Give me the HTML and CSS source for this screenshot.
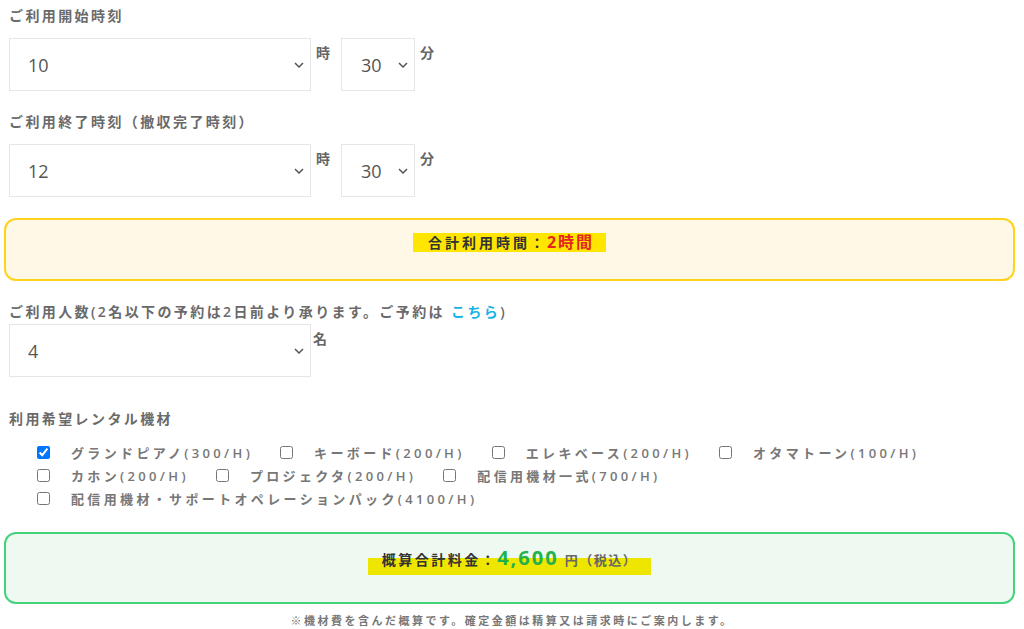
FILE: index.html
```html
<!DOCTYPE html>
<html lang="ja">
<head>
<meta charset="UTF-8" />
<meta name="viewport" content="width=device-width, initial-scale=1" />
<title>ご利用予約</title>
<link rel="stylesheet" href="styles.css">
</head>
<body>
<div class="form">
  <!-- 開始時刻 -->
  <div class="field">
    <div class="field-label">ご利用開始時刻</div>
    <div class="field-row">
      <div class="select-wrap select-hour">
        <select><option>10</option></select>
        <svg class="chevron" width="10" height="6" viewBox="0 0 10 6"><polyline points="1,1 5,5 9,1" /></svg>
      </div>
      <span class="unit">時</span>
      <div class="select-wrap select-min">
        <select><option>30</option></select>
        <svg class="chevron" width="10" height="6" viewBox="0 0 10 6"><polyline points="1,1 5,5 9,1" /></svg>
      </div>
      <span class="unit">分</span>
    </div>
  </div>

  <!-- 終了時刻 -->
  <div class="field">
    <div class="field-label">ご利用終了時刻（撤収完了時刻）</div>
    <div class="field-row">
      <div class="select-wrap select-hour">
        <select><option>12</option></select>
        <svg class="chevron" width="10" height="6" viewBox="0 0 10 6"><polyline points="1,1 5,5 9,1" /></svg>
      </div>
      <span class="unit">時</span>
      <div class="select-wrap select-min">
        <select><option>30</option></select>
        <svg class="chevron" width="10" height="6" viewBox="0 0 10 6"><polyline points="1,1 5,5 9,1" /></svg>
      </div>
      <span class="unit">分</span>
    </div>
  </div>

  <div class="summary summary-time">
    <span class="marker">合計利用時間：<span class="hours">2時間</span></span>
  </div>

  <!-- 人数 -->
  <div class="field field-people">
    <div class="field-label">ご利用人数(2名以下の予約は2日前より承ります。ご予約は <a href="#" class="link">こちら</a>)</div>
    <div class="field-row">
      <div class="select-wrap select-hour">
        <select><option>4</option></select>
        <svg class="chevron" width="10" height="6" viewBox="0 0 10 6"><polyline points="1,1 5,5 9,1" /></svg>
      </div>
      <span class="unit unit-tight">名</span>
    </div>
  </div>

  <!-- 機材 -->
  <div class="field-label">利用希望レンタル機材</div>
  <div class="options">
    <label class="option"><input type="checkbox" checked><span>グランドピアノ(300/H)</span></label>
    <label class="option"><input type="checkbox"><span>キーボード(200/H)</span></label>
    <label class="option"><input type="checkbox"><span>エレキベース(200/H)</span></label>
    <label class="option"><input type="checkbox"><span>オタマトーン(100/H)</span></label>
    <label class="option"><input type="checkbox"><span>カホン(200/H)</span></label>
    <label class="option"><input type="checkbox"><span>プロジェクタ(200/H)</span></label>
    <label class="option"><input type="checkbox"><span>配信用機材一式(700/H)</span></label>
    <label class="option"><input type="checkbox"><span>配信用機材・サポートオペレーションパック(4100/H)</span></label>
  </div>

  <div class="summary summary-price">
    <span class="marker marker-low">概算合計料金：<span class="price">4,600</span> <span class="yen">円（税込）</span></span>
  </div>
  <div class="note">※機材費を含んだ概算です。確定金額は精算又は請求時にご案内します。</div>
</div>
</body>
</html>
```

FILE: styles.css
```css
/* 基本 */
html, body {
  margin: 0;
  padding: 0;
  background: #fff;
  font-family: 'Open Sans', 'Noto Sans CJK JP', sans-serif;
  color: #555;
}
.form {
  padding: 6px 9px 0 9px;
}
.field {
  margin-bottom: 21px;
}
.field-label {
  font-size: 14px;
  line-height: 20px;
  font-weight: 600;
  color: #6a6a6a;
  letter-spacing: 2.4px;
  margin-bottom: 12px;
}
.field-people {
  margin-bottom: 32px;
}
.field-people .field-label {
  margin-bottom: 2px;
}
.link {
  color: #17b3e6;
  text-decoration: none;
}
.field-row {
  display: flex;
  align-items: flex-start;
}

/* セレクト */
.select-wrap {
  position: relative;
  height: 53px;
}
.select-wrap select {
  appearance: none;
  -webkit-appearance: none;
  box-sizing: border-box;
  width: 100%;
  height: 53px;
  margin: 0;
  padding: 0 0 0 18px;
  border: 1px solid #e6e6e6;
  border-radius: 0;
  background: #fff;
  font-family: 'Open Sans', 'Noto Sans CJK JP', sans-serif;
  font-size: 18px;
  color: #555;
  outline: none;
}
.select-hour { width: 302px; }
.select-min { width: 74px; }
.select-min select { padding-left: 19px; }
.chevron {
  position: absolute;
  right: 7px;
  top: 24px;
  pointer-events: none;
}
.chevron polyline {
  fill: none;
  stroke: #555;
  stroke-width: 1.5;
}
.unit {
  font-size: 14px;
  line-height: 20px;
  font-weight: 600;
  color: #666;
  padding-top: 5px;
  margin: 0 11px 0 5px;
}
.unit-tight {
  margin-left: 2px;
}

/* 合計ボックス */
.summary {
  box-sizing: border-box;
  margin: 0 0 21px -5px;
  border-radius: 12px;
  text-align: center;
  font-weight: 700;
  color: #333;
  font-size: 14px;
}
.summary-time {
  height: 63px;
  border: 2px solid #ffd21c;
  background: #fff8e6;
  padding-top: 12px;
  line-height: 21px;
  letter-spacing: 3px;
}
.marker {
  background: #ffe600;
  padding: 0 12px 0 15px;
}
.hours {
  color: #e4261e;
  font-size: 16px;
  letter-spacing: 2px;
}
.summary-price {
  height: 72px;
  border: 2px solid #45d27c;
  background: #eef9f1;
  padding-top: 10px;
  line-height: 28px;
  letter-spacing: 2.5px;
  margin-bottom: 0;
}
.marker-low {
  background: linear-gradient(transparent 32%, #efe600 32%);
  padding: 0 14px 6px 14px;
}
.price {
  color: #22b24c;
  font-size: 20px;
  letter-spacing: 2px;
}
.yen {
  color: #666;
  font-size: 13px;
  letter-spacing: 1.5px;
}
.note {
  margin-top: 9px;
  text-align: center;
  font-size: 11px;
  line-height: 16px;
  font-weight: 700;
  color: #777;
  letter-spacing: 2.5px;
}

/* チェックボックス */
.options {
  display: flex;
  flex-wrap: wrap;
  padding-left: 28px;
  margin: 8px 0 22px;
}
.option {
  display: flex;
  align-items: center;
  height: 23px;
  margin-right: 27px;
  font-size: 13px;
  font-weight: 600;
  color: #777;
  letter-spacing: 3.35px;
}
.option input {
  width: 13px;
  height: 13px;
  margin: 0 21px 0 0;
}
```
